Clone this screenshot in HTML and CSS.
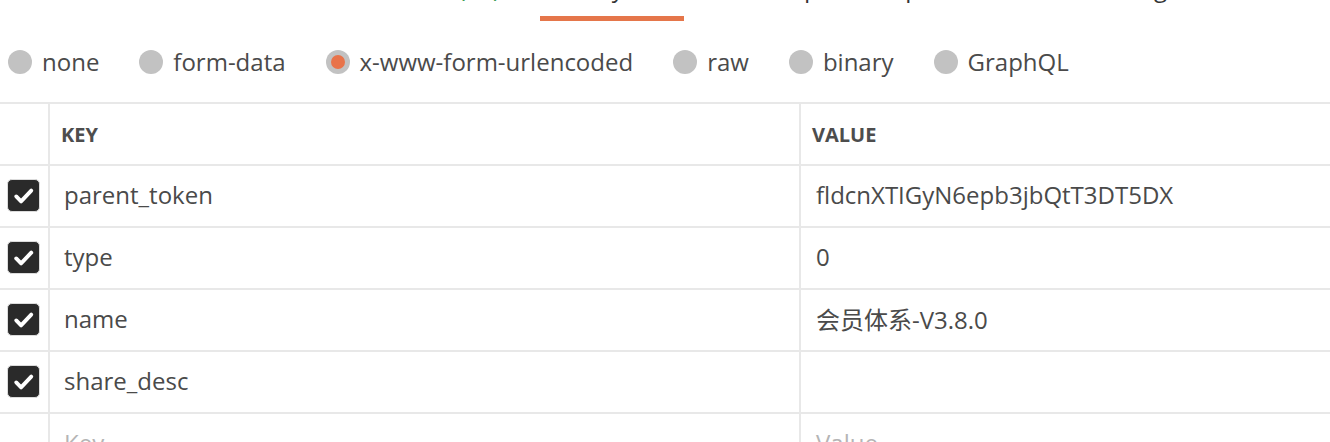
FILE: index.html
```html
<!DOCTYPE html>
<html lang="en">
<head>
<meta charset="utf-8">
<title>Body</title>
<link rel="stylesheet" href="styles.css">
</head>
<body>
<div class="page">
  <div class="tabs-wrap">
    <div class="tabs">
      <div class="tab"><span class="tab-label">Params</span></div>
      <div class="tab"><span class="tab-label">Authorization</span></div>
      <div class="tab"><span class="tab-label">Headers <span class="count">(10)</span></span></div>
      <div class="tab active"><span class="tab-label">Body<span class="dot"></span></span></div>
      <div class="tab"><span class="tab-label">Pre-request Script</span></div>
      <div class="tab tab-tests"><span class="tab-label">Tests</span></div>
      <div class="tab tab-settings"><span class="tab-label">Settings</span></div>
    </div>
  </div>

  <div class="modes">
    <label class="mode"><span class="radio"></span><span class="mode-text">none</span></label>
    <label class="mode"><span class="radio"></span><span class="mode-text">form-data</span></label>
    <label class="mode"><span class="radio checked"></span><span class="mode-text">x-www-form-urlencoded</span></label>
    <label class="mode"><span class="radio"></span><span class="mode-text">raw</span></label>
    <label class="mode"><span class="radio"></span><span class="mode-text">binary</span></label>
    <label class="mode"><span class="radio"></span><span class="mode-text">GraphQL</span></label>
  </div>

  <div class="kv">
    <div class="kv-row kv-head">
      <div class="cell c-check"></div>
      <div class="cell c-key">KEY</div>
      <div class="cell c-val">VALUE</div>
    </div>
    <div class="kv-row">
      <div class="cell c-check"><span class="checkbox"><svg viewBox="0 0 32 32" width="32" height="32"><path d="M8.5 16.5 L13.5 21.5 L24 10.5" fill="none" stroke="#fff" stroke-width="4" stroke-linecap="round" stroke-linejoin="round"/></svg></span></div>
      <div class="cell c-key">parent_token</div>
      <div class="cell c-val">fldcnXTIGyN6epb3jbQtT3DT5DX</div>
    </div>
    <div class="kv-row">
      <div class="cell c-check"><span class="checkbox"><svg viewBox="0 0 32 32" width="32" height="32"><path d="M8.5 16.5 L13.5 21.5 L24 10.5" fill="none" stroke="#fff" stroke-width="4" stroke-linecap="round" stroke-linejoin="round"/></svg></span></div>
      <div class="cell c-key">type</div>
      <div class="cell c-val">0</div>
    </div>
    <div class="kv-row">
      <div class="cell c-check"><span class="checkbox"><svg viewBox="0 0 32 32" width="32" height="32"><path d="M8.5 16.5 L13.5 21.5 L24 10.5" fill="none" stroke="#fff" stroke-width="4" stroke-linecap="round" stroke-linejoin="round"/></svg></span></div>
      <div class="cell c-key">name</div>
      <div class="cell c-val">会员体系-V3.8.0</div>
    </div>
    <div class="kv-row">
      <div class="cell c-check"><span class="checkbox"><svg viewBox="0 0 32 32" width="32" height="32"><path d="M8.5 16.5 L13.5 21.5 L24 10.5" fill="none" stroke="#fff" stroke-width="4" stroke-linecap="round" stroke-linejoin="round"/></svg></span></div>
      <div class="cell c-key">share_desc</div>
      <div class="cell c-val"></div>
    </div>
    <div class="kv-row">
      <div class="cell c-check"></div>
      <div class="cell c-key placeholder">Key</div>
      <div class="cell c-val placeholder">Value</div>
    </div>
  </div>
</div>
</body>
</html>
```

FILE: styles.css
```css
html, body {
  margin: 0;
  padding: 0;
  background: #ffffff;
  overflow: hidden;
}

.page {
  width: 1330px;
  height: 442px;
  overflow: hidden;
  font-family: "Open Sans", "Noto Sans CJK SC", sans-serif;
  color: #505050;
}

/* tabs (mostly scrolled out of view) */
.tabs-wrap {
  height: 21px;
  overflow: hidden;
}

.tabs {
  display: flex;
  gap: 16px;
  margin-left: -45px;
  margin-top: -24px;
}

.tab {
  padding: 0 27px 16px;
  border-bottom: 5px solid transparent;
  font-size: 24px;
  line-height: 24px;
  color: #333333;
  white-space: nowrap;
}

.tab.active {
  border-bottom-color: #e5764a;
  margin-left: -3px;
  padding-left: 27px;
  padding-right: 44px;
}

.tab.tab-tests {
  padding-right: 9px;
}

.tab.tab-settings {
  padding-left: 8px;
}

.tab-label .count {
  color: #3b9c54;
}

.dot {
  display: inline-block;
  width: 10px;
  height: 10px;
  margin-left: 6px;
  border-radius: 50%;
  background: #3b9c54;
  vertical-align: top;
}

/* body mode radios */
.modes {
  height: 81px;
  display: flex;
  align-items: center;
  gap: 40px;
  padding-left: 8px;
}

.mode {
  display: flex;
  align-items: center;
  gap: 10px;
  font-size: 24px;
  line-height: 32px;
  color: #4a4a4a;
}

.radio {
  width: 24px;
  height: 24px;
  border-radius: 50%;
  background: #c2c2c2;
  display: flex;
  align-items: center;
  justify-content: center;
}

.radio.checked::after {
  content: "";
  width: 14px;
  height: 14px;
  border-radius: 50%;
  background: #e8734a;
}

/* key / value table */
.kv {
  border-top: 2px solid #e8e8e8;
}

.kv-row {
  display: grid;
  grid-template-columns: 50px 751px 1fr;
  height: 62px;
  box-sizing: border-box;
  border-bottom: 2px solid #e8e8e8;
}

.cell {
  display: flex;
  align-items: center;
  box-sizing: border-box;
  padding-bottom: 3px;
  font-size: 24px;
  color: #4a4a4a;
  white-space: nowrap;
}

.c-check {
  border-right: 2px solid #e8e8e8;
  padding-left: 7px;
  padding-bottom: 1px;
}

.c-key {
  border-right: 2px solid #e8e8e8;
  padding-left: 14px;
}

.c-val {
  padding-left: 15px;
}

.kv-head .cell {
  padding-bottom: 0;
  font-size: 20px;
  font-weight: 700;
  color: #4d4d4d;
}

.kv-head .c-key {
  padding-left: 11px;
}

.kv-head .c-val {
  padding-left: 11px;
}

.placeholder {
  color: #b5b5b5;
}

.checkbox {
  width: 33px;
  height: 33px;
  box-sizing: border-box;
  border: 1px solid #dcdcdc;
  border-radius: 5px;
  background: #2a2a2a;
  display: flex;
  align-items: center;
  justify-content: center;
}

.checkbox svg {
  display: block;
}
```
